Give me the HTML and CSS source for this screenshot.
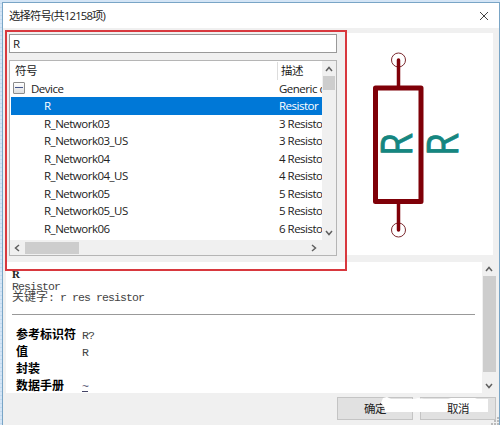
FILE: index.html
```html
<!DOCTYPE html>
<html lang="zh-CN">
<head>
<meta charset="utf-8">
<title>选择符号</title>
<link rel="stylesheet" href="styles.css">
</head>
<body>
<div class="window">
  <header class="titlebar">
    <span class="title">选择符号(共12158项)</span>
    <svg class="close" width="10" height="10" viewBox="0 0 10 10"><path d="M1 1l8 8M9 1l-8 8"/></svg>
  </header>
  <main class="upper">
    <section class="chooser">
      <div class="search">R</div>
      <div class="tree">
        <div class="viewport">
          <div class="row head"><span class="name">符号</span><span class="desc">描述</span></div>
          <div class="row group"><span class="name"><i class="toggle"></i>Device</span><span class="desc">Generic d</span></div>
          <div class="row item selected"><span class="name">R</span><span class="desc">Resistor</span></div>
          <div class="row item"><span class="name">R_Network03</span><span class="desc">3 Resisto</span></div>
          <div class="row item"><span class="name">R_Network03_US</span><span class="desc">3 Resisto</span></div>
          <div class="row item"><span class="name">R_Network04</span><span class="desc">4 Resisto</span></div>
          <div class="row item"><span class="name">R_Network04_US</span><span class="desc">4 Resisto</span></div>
          <div class="row item"><span class="name">R_Network05</span><span class="desc">5 Resisto</span></div>
          <div class="row item"><span class="name">R_Network05_US</span><span class="desc">5 Resisto</span></div>
          <div class="row item"><span class="name">R_Network06</span><span class="desc">6 Resisto</span></div>
        </div>
        <div class="vbar">
          <svg class="arrow" width="8" height="6" viewBox="0 0 8 6"><path d="M1 5l3-3.5L7 5"/></svg>
          <div class="thumb"></div>
          <svg class="arrow end" width="8" height="6" viewBox="0 0 8 6"><path d="M1 1l3 3.5L7 1"/></svg>
        </div>
        <div class="hbar">
          <svg class="arrow" width="6" height="8" viewBox="0 0 6 8"><path d="M5 1L1.5 4 5 7"/></svg>
          <div class="hthumb"></div>
          <svg class="arrow end" width="6" height="8" viewBox="0 0 6 8"><path d="M1 1l3.5 3L1 7"/></svg>
        </div>
      </div>
    </section>
    <section class="preview">
      <svg width="146" height="222" viewBox="347 33 146 222">
        <g class="pins"><circle cx="398.5" cy="60" r="7"/><circle cx="398.5" cy="230" r="7"/></g>
        <path class="lead" d="M398.5 60v28M398.5 202v28"/>
        <rect class="body" x="375.5" y="88" width="45.5" height="113.5"/>
        <text class="ref" transform="translate(412.3 156) rotate(-90)" textLength="23" lengthAdjust="spacingAndGlyphs">R</text>
        <text class="ref" transform="translate(457.8 156) rotate(-90)" textLength="23" lengthAdjust="spacingAndGlyphs">R</text>
      </svg>
    </section>
  </main>
  <section class="details">
    <div class="doc">
      <b class="symbol">R</b>
      <div class="line">Resistor</div>
      <div class="line"><span class="cjk">关键字</span>: r res resistor</div>
      <hr>
      <dl>
        <dt>参考标识符</dt><dd>R?</dd>
        <dt>值</dt><dd>R</dd>
        <dt>封装</dt><dd></dd>
        <dt>数据手册</dt><dd><u>~</u></dd>
      </dl>
    </div>
    <div class="docbar">
      <svg class="arrow" width="8" height="6" viewBox="0 0 8 6"><path d="M1 5l3-3.5L7 5"/></svg>
      <div class="docthumb"></div>
      <svg class="arrow end" width="8" height="6" viewBox="0 0 8 6"><path d="M1 1l3 3.5L7 1"/></svg>
    </div>
  </section>
  <footer class="actions">
    <div class="button">确定</div>
    <div class="button"><span class="label">取消</span></div>
    <svg class="smudge" width="110" height="17" viewBox="0 0 110 17"><path d="M3 2l4-1 4 2h23l4-1 6 1h24l3-1h24l2 1h11v13H5v-4L1 7z"/></svg>
    <svg class="grip" width="8" height="8" viewBox="0 0 8 8"><path d="M6 0h2v2H6zM3 3h2v2H3zM6 3h2v2H6zM0 6h2v2H0zM3 6h2v2H3zM6 6h2v2H6z"/></svg>
  </footer>
  <div class="highlight"></div>
</div>
</body>
</html>
```
FILE: styles.css
```css
* { box-sizing: border-box; }
body {
  margin: 0;
  width: 500px;
  height: 425px;
  overflow: hidden;
  padding: 2px 0 0 2px;
  background: repeating-linear-gradient(#d4e5f6 0 3px, #c4daef 3px 4px);
  font: 11.5px/17.5px "Open Sans", "Noto Sans CJK SC", sans-serif;
  letter-spacing: -.5px;
  color: #222;
}
.window {
  position: relative;
  width: 498px;
  height: 423px;
  border: 1px solid #79a5c6;
  border-bottom: 0;
  background: #f0f0f0;
}
.titlebar {
  display: flex;
  justify-content: space-between;
  align-items: center;
  height: 25px;
  padding: 0 10px 0 6px;
  background: #fff;
}
.title { font-size: 11.3px; letter-spacing: -.82px; }
.close { fill: none; stroke: #444; stroke-width: 1; }
.upper {
  display: flex;
  justify-content: space-between;
  height: 234px;
  padding: 5px 6px 0 6px;
}
.chooser { width: 328px; padding-top: 1px; }
.search {
  height: 19px;
  padding-left: 3px;
  border: 1px solid #999;
  background: #fff;
  line-height: 17px;
}
.tree {
  display: grid;
  grid-template: 179px 15px / 1fr 14px;
  height: 196px;
  margin-top: 7px;
  border: 1px solid #b5b5b5;
  background: #fff;
}
.viewport { overflow: hidden; padding: 1px 0 0 1px; }
.row { display: flex; height: 17.5px; line-height: 17px; white-space: nowrap; }
.name { flex: 0 0 266px; }
.desc { flex: 0 0 45px; width: 45px; overflow: hidden; padding-left: 2px; }
.head .name { padding-left: 4px; }
.head .desc { border-left: 1px solid #ddd; padding-left: 3px; }
.group .name { display: flex; align-items: center; gap: 6px; padding-left: 2px; }
.toggle {
  width: 12px;
  height: 12px;
  padding: 4px 1px 0;
  border: 1px solid #8c8c8c;
  border-radius: 1px;
  background: linear-gradient(#fff, #dedede);
}
.toggle::before { content: ""; display: block; height: 1px; background: #45568c; }
.item .name { padding-left: 33px; }
.selected { background: #0078d7; color: #fff; }
.vbar, .docbar {
  display: flex;
  flex-direction: column;
  align-items: center;
  background: #f0f0f0;
}
.arrow { flex: none; fill: none; stroke: #606060; stroke-width: 1.5; }
.vbar { padding: 5px 0 4px; }
.thumb { width: 12px; height: 14px; margin-top: 4px; background: #cdcdcd; }
.end { margin-top: auto; }
.hbar {
  grid-column: 1 / 3;
  display: flex;
  align-items: center;
  padding: 0 19px 0 4px;
  background: #f0f0f0;
}
.hthumb { width: 54px; height: 12px; margin-left: 5px; background: #cdcdcd; }
.hbar .end { margin: 0 0 0 auto; }
.preview { width: 146px; height: 222px; background: #fff; }
.preview svg { display: block; }
.pins { fill: none; stroke: #7c2b30; stroke-width: 1; }
.lead { fill: none; stroke: #7f0008; stroke-width: 3.5; stroke-linecap: round; }
.body { fill: none; stroke: #7f0008; stroke-width: 5; stroke-linejoin: round; }
.ref {
  font: 43px "Open Sans", sans-serif;
  letter-spacing: 0;
  fill: #158680;
  stroke: #158680;
  stroke-width: .9;
  stroke-linejoin: round;
}
.details {
  display: flex;
  height: 131px;
  margin: 0 3px;
  background: #fff;
}
.doc {
  flex: 1;
  overflow: hidden;
  padding: 6px 7px 0 6px;
  font: 12px/12px "Liberation Mono", "Noto Sans CJK SC", monospace;
}
.symbol { display: block; height: 13px; font: bold 11px/13px "Liberation Serif", serif; }
.line { height: 11px; line-height: 11px; font-size: 11.5px; letter-spacing: -.9px; color: #444; }
.cjk { font-size: 12px; letter-spacing: 0; }
hr { height: 1px; margin: 11px 0 10px; border: 0; background: #999; }
dl {
  display: grid;
  grid-template-columns: 66px 1fr;
  grid-auto-rows: 17px;
  margin: 0 0 0 4px;
  line-height: 17px;
}
dt { font: bold 12px/18px "Noto Sans CJK SC", sans-serif; letter-spacing: 0; color: #000; }
dd { margin: 0; font-size: 11.5px; line-height: 21px; letter-spacing: -.9px; color: #444; }
u { color: #446; }
.docbar { width: 14px; padding: 4px 0; }
.docthumb { width: 13px; height: 96px; margin-top: 4px; background: #cdcdcd; }
.actions {
  position: relative;
  display: flex;
  justify-content: flex-end;
  gap: 7px;
  padding: 4px 3px 0 0;
}
.button {
  width: 76px;
  height: 23px;
  border: 1px solid #c4c4c4;
  background: #e1e1e1;
  text-align: center;
  line-height: 21px;
}
.label { position: relative; z-index: 1; }
.smudge { position: absolute; right: 9px; top: 3px; fill: #fff; }
.grip { position: absolute; right: 0; top: 24px; fill: #bbb; }
.highlight {
  position: absolute;
  left: 2px;
  top: 27px;
  width: 342px;
  height: 241px;
  border: 2px solid #d8383e;
}
```
